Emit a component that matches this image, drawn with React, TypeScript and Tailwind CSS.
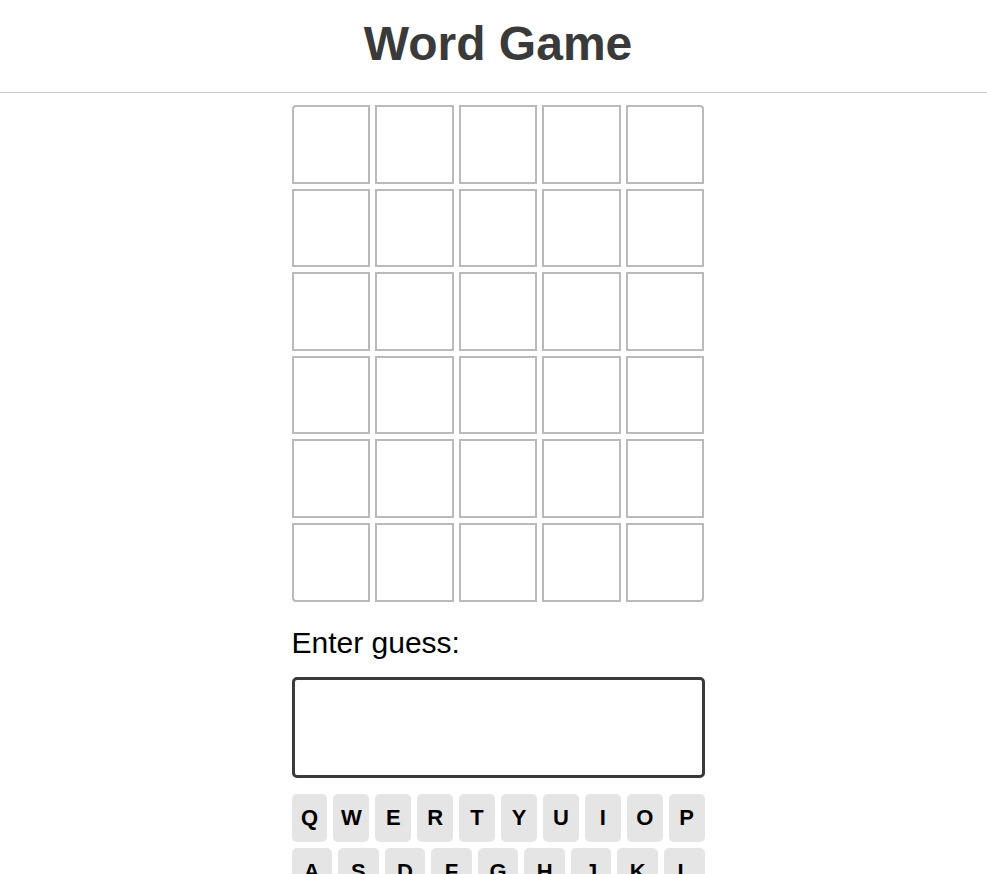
import React, { useState } from "react";

const ROWS = 6;
const COLS = 5;
const KEY_ROWS = [
  ["Q", "W", "E", "R", "T", "Y", "U", "I", "O", "P"],
  ["A", "S", "D", "F", "G", "H", "J", "K", "L"],
  ["Enter", "Z", "X", "C", "V", "B", "N", "M", "Del"],
];

// only the four outer corners of the board are rounded
const cornerClass = (r: number, c: number) => {
  if (r === 0 && c === 0) return "rounded-tl-[4px]";
  if (r === 0 && c === COLS - 1) return "rounded-tr-[4px]";
  if (r === ROWS - 1 && c === 0) return "rounded-bl-[4px]";
  if (r === ROWS - 1 && c === COLS - 1) return "rounded-br-[4px]";
  return "";
};

const App: React.FC = () => {
  const [guess, setGuess] = useState("");

  const pressKey = (k: string) => {
    if (k === "Del") setGuess((g) => g.slice(0, -1));
    else if (k === "Enter") setGuess("");
    else setGuess((g) => (g.length < COLS ? g + k : g));
  };

  return (
    <div className="min-h-screen bg-white font-['Liberation_Sans',Arial,sans-serif]">
      <header className="border-b border-[#cccccc] pl-[9px] pt-5 pb-6 text-center">
        <h1 className="text-[48px] font-bold leading-none text-[#3a3a3a]">Word Game</h1>
      </header>

      <div className="pl-[9px]">
        <main className="mx-auto w-[413px]">
          {/* board */}
          <div className="mt-3 grid grid-cols-5 gap-[5px]">
            {Array.from({ length: ROWS }).map((_, r) =>
              Array.from({ length: COLS }).map((_, c) => (
                <div
                  key={`${r}-${c}`}
                  className={`aspect-square border-2 border-[#bababa] bg-white ${cornerClass(r, c)}`}
                />
              ))
            )}
          </div>

          <label htmlFor="guess" className="mt-[18px] mb-3 block text-[30px] text-black">
            Enter guess:
          </label>
          <input
            id="guess"
            value={guess}
            onChange={(e) => setGuess(e.target.value.toUpperCase().slice(0, COLS))}
            className="block h-[101px] w-full rounded-[5px] border-[3px] border-[#3a3a3a] px-3 text-3xl outline-none"
          />

          {/* on-screen keyboard */}
          <div className="mt-4 flex flex-col gap-[6px]">
            {KEY_ROWS.map((row, i) => (
              <div key={i} className="flex gap-[6px]">
                {row.map((k) => (
                  <button
                    key={k}
                    onClick={() => pressKey(k)}
                    className="flex h-12 flex-1 items-center justify-center rounded-[5px] bg-[#e5e5e5] text-[22px] font-bold text-black"
                  >
                    {k}
                  </button>
                ))}
              </div>
            ))}
          </div>
        </main>
      </div>
    </div>
  );
};

export default App;
